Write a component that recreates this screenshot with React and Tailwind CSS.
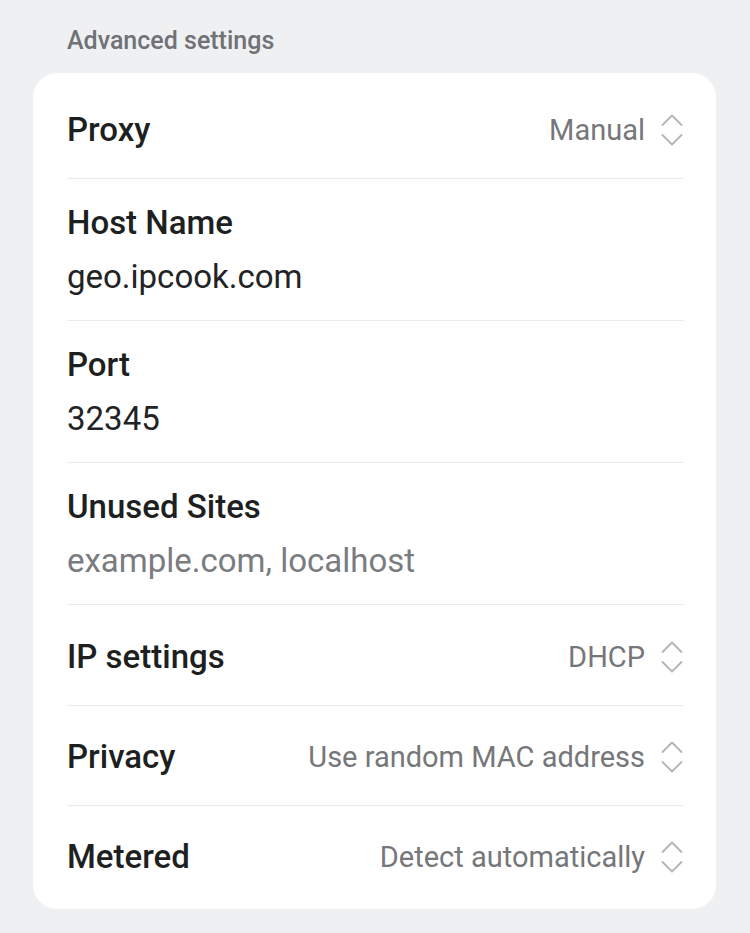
import React from "react";

function Chevrons() {
  return (
    <svg width="24" height="34" viewBox="0 0 24 34" fill="none" stroke="#b4b4b4" strokeWidth="1.8" strokeLinecap="round" strokeLinejoin="round" className="ml-[15px] shrink-0">
      <path d="M2.5 12 L12 2.5 L21.5 12" />
      <path d="M2.5 22 L12 31.5 L21.5 22" />
    </svg>
  );
}

function SelectRow({ label, value, cls }) {
  return (
    <div className={`flex items-center justify-between ${cls}`}>
      <span className="text-[33px] leading-[40px] font-medium text-[#1e1f21]">{label}</span>
      <div className="flex items-center">
        <span className="text-[29px] leading-[40px] text-[#75777a]">{value}</span>
        <Chevrons />
      </div>
    </div>
  );
}

function FieldRow({ label, value, muted }) {
  return (
    <div className="pt-[24px] pb-[23px]">
      <div className="text-[33px] leading-[40px] font-medium text-[#1e1f21]">{label}</div>
      <div className={`mt-[14px] text-[33px] leading-[40px] ${muted ? "text-[#7a7c7f]" : "text-[#222325]"}`}>{value}</div>
    </div>
  );
}

function Divider() {
  return <div className="h-px bg-[#ebebec]" />;
}

export default function App() {
  return (
    <div className="min-h-[933px] w-[750px] bg-[#eff0f2] pt-[26px]" style={{ fontFamily: "Roboto, 'Noto Sans', sans-serif" }}>
      <div className="pl-[67px] text-[25px] leading-[30px] font-medium text-[#707276]">Advanced settings</div>
      <div className="mt-[17px] mx-[33px] w-[683px] rounded-[24px] bg-white pl-[34px] pr-[32px]">
        <SelectRow label="Proxy" value="Manual" cls="pt-[37px] pb-[28px]" />
        <Divider />
        <FieldRow label="Host Name" value="geo.ipcook.com" />
        <Divider />
        <FieldRow label="Port" value="32345" />
        <Divider />
        <FieldRow label="Unused Sites" value="example.com, localhost" muted />
        <Divider />
        <SelectRow label="IP settings" value="DHCP" cls="pt-[32px] pb-[28px]" />
        <Divider />
        <SelectRow label="Privacy" value="Use random MAC address" cls="pt-[31px] pb-[28px]" />
        <Divider />
        <SelectRow label="Metered" value="Detect automatically" cls="pt-[31px] pb-[32px]" />
      </div>
    </div>
  );
}
